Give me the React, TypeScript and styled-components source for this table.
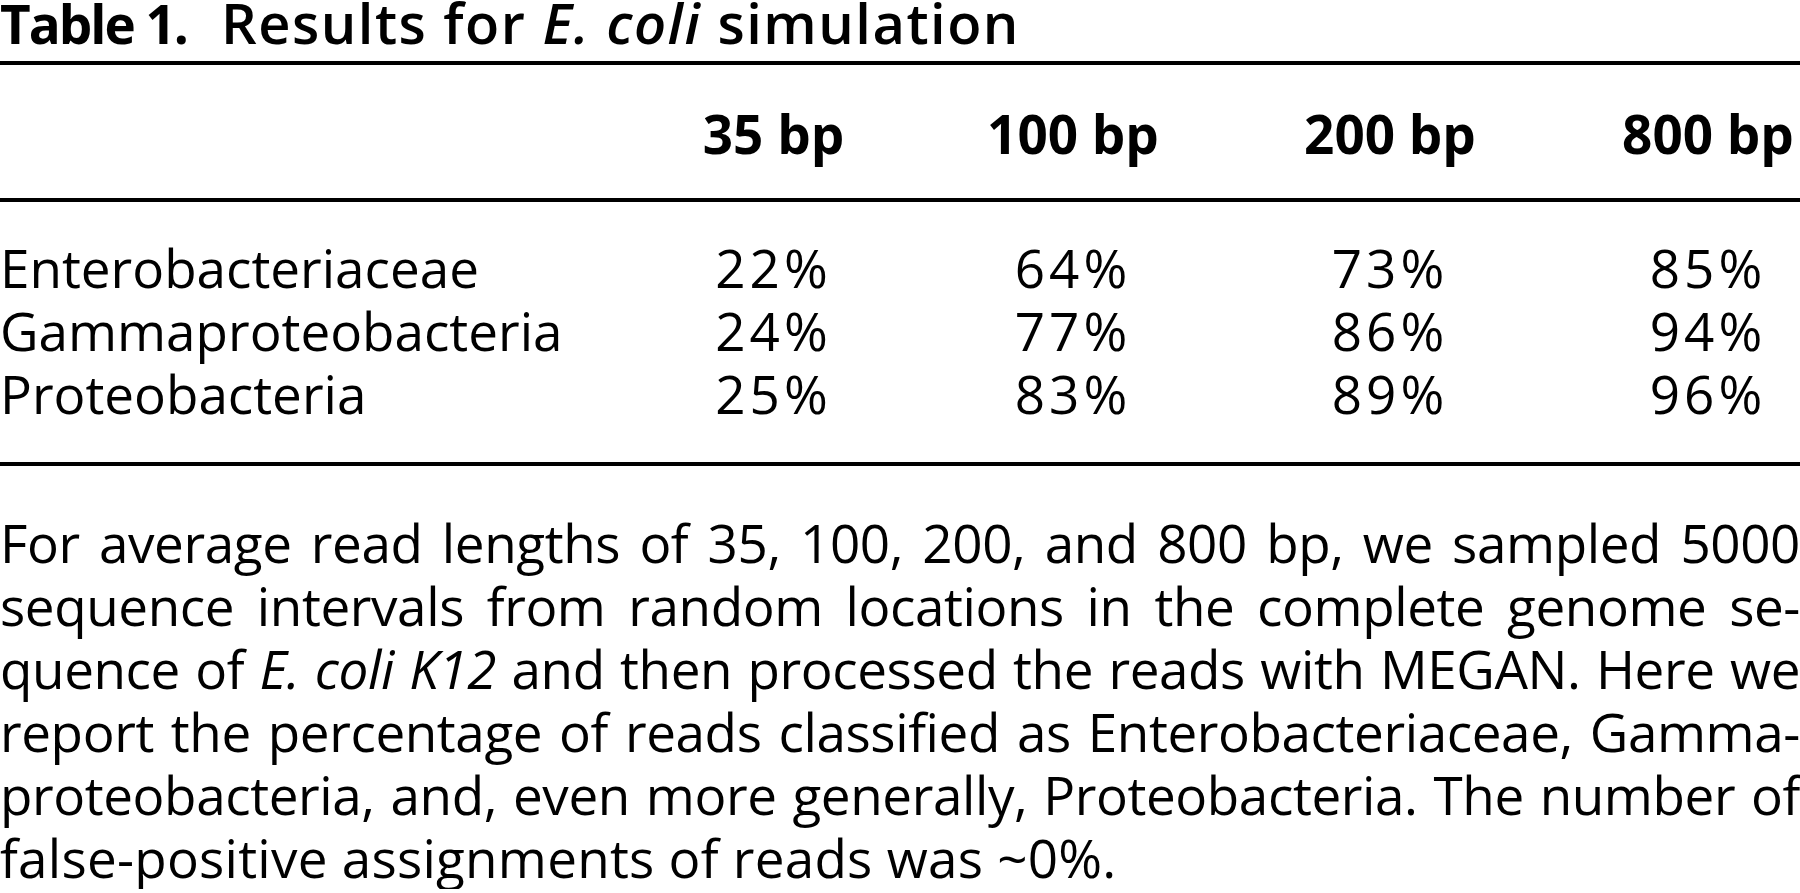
import React from 'react'
import styled, { createGlobalStyle } from 'styled-components'

const GlobalStyle = createGlobalStyle`
  body {
    margin: 0;
    background: #fff;
    color: #000;
    font-family: "Open Sans", "Liberation Sans", sans-serif;
  }
`

// widths of the bp columns, taken from the header text in the print
const columns = [
  { label: '35 bp', width: 149 },
  { label: '100 bp', width: 182 },
  { label: '200 bp', width: 184 },
  { label: '800 bp', width: 184 },
]

const rows = [
  { taxon: 'Enterobacteriaceae', values: ['22%', '64%', '73%', '85%'] },
  { taxon: 'Gammaproteobacteria', values: ['24%', '77%', '86%', '94%'] },
  { taxon: 'Proteobacteria', values: ['25%', '83%', '89%', '96%'] },
]

const ResultsTable = () => {
  return (
    <Wrapper>
      <Title>
        <TableNo>Table 1.</TableNo>
        <TableName>
          Results for <em>E. coli</em> simulation
        </TableName>
      </Title>
      <Rule />
      <Head>
        <HeadCell />
        {columns.map((c) => (
          <HeadCell key={c.label}>{c.label}</HeadCell>
        ))}
      </Head>
      <Rule />
      <Body>
        {rows.map((r) => (
          <React.Fragment key={r.taxon}>
            <Taxon>{r.taxon}</Taxon>
            {r.values.map((v, i) => (
              <Value key={i}>{v}</Value>
            ))}
          </React.Fragment>
        ))}
      </Body>
      <Rule />
      <Caption>
        <Line>For average read lengths of 35, 100, 200, and 800 bp, we sampled 5000</Line>
        <Line>sequence intervals from random locations in the complete genome se-</Line>
        <Line>
          quence of <em>E. coli K12</em> and then processed the reads with MEGAN. Here we
        </Line>
        <Line>report the percentage of reads classified as Enterobacteriaceae, Gamma-</Line>
        <Line>proteobacteria, and, even more generally, Proteobacteria. The number of</Line>
        <LastLine>false-positive assignments of reads was ~0%.</LastLine>
      </Caption>
    </Wrapper>
  )
}

const Wrapper = styled.div`
  width: 1800px;
  font-size: 53px;
  line-height: 63px;
  em {
    font-style: italic;
  }
`

const Title = styled.div`
  display: flex;
  align-items: baseline;
  gap: 34px;
  line-height: 44px;
  margin-bottom: 15px;
  white-space: nowrap;
`

const TableNo = styled.span`
  font-weight: 700;
  letter-spacing: -2px;
`

const TableName = styled.span`
  font-size: 56px;
  font-weight: 600;
  letter-spacing: 1.5px;
`

const Rule = styled.div`
  height: 4px;
  background: #000;
`

const Head = styled.div`
  display: grid;
  grid-template-columns: 1fr ${columns.map((c) => `${c.width}px`).join(' ')};
  column-gap: 134px;
  padding: 37px 0 33px;
`

const HeadCell = styled.div`
  font-weight: 700;
  text-align: center;
  white-space: nowrap;
`

const Body = styled(Head)`
  padding: 34px 0 37px;
`

const Taxon = styled.div`
  white-space: nowrap;
`

const Value = styled.div`
  text-align: center;
  letter-spacing: 4px;
`

const Caption = styled.div`
  margin-top: 45px;
  text-align: justify;
  letter-spacing: -0.4px;
`

const Line = styled.span`
  display: block;
  text-align-last: justify;
`

const LastLine = styled.span`
  display: block;
  text-align-last: left;
  letter-spacing: 0.25px;
`

export default function App() {
  return (
    <>
      <GlobalStyle />
      <ResultsTable />
    </>
  )
}
